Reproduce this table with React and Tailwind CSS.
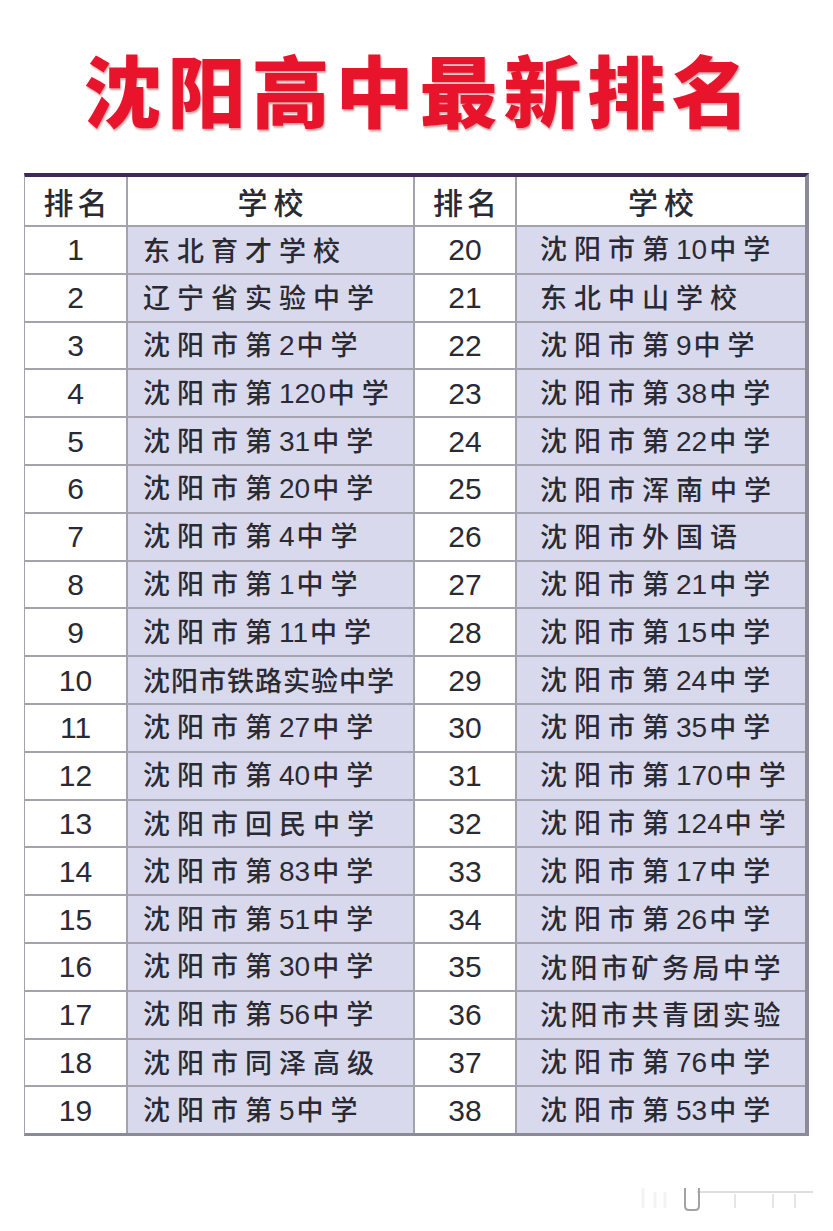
import React from 'react'

const left = [
  '东北育才学校', '辽宁省实验中学', '沈阳市第2中学', '沈阳市第120中学', '沈阳市第31中学',
  '沈阳市第20中学', '沈阳市第4中学', '沈阳市第1中学', '沈阳市第11中学', '沈阳市铁路实验中学',
  '沈阳市第27中学', '沈阳市第40中学', '沈阳市回民中学', '沈阳市第83中学', '沈阳市第51中学',
  '沈阳市第30中学', '沈阳市第56中学', '沈阳市同泽高级', '沈阳市第5中学',
]

const right = [
  '沈阳市第10中学', '东北中山学校', '沈阳市第9中学', '沈阳市第38中学', '沈阳市第22中学',
  '沈阳市浑南中学', '沈阳市外国语', '沈阳市第21中学', '沈阳市第15中学', '沈阳市第24中学',
  '沈阳市第35中学', '沈阳市第170中学', '沈阳市第124中学', '沈阳市第17中学', '沈阳市第26中学',
  '沈阳市矿务局中学', '沈阳市共青团实验', '沈阳市第76中学', '沈阳市第53中学',
]

// digits sit tight, CJK characters get the wide spacing (less when the name is long)
function SchoolName({ name }) {
  const parts = name.split(/(\d+)/).filter(Boolean)
  const cjk = name.replace(/\d/g, '').length
  const spacing = cjk >= 9 ? 'tracking-[1px]' : cjk === 8 ? 'tracking-[3.5px]' : 'tracking-[7px]'
  return (
    <span className={spacing}>
      {parts.map((p, i) =>
        /\d/.test(p) ? (
          <span key={i} className="tracking-normal text-[28px] font-['Liberation_Sans',sans-serif] mr-[2px]">{p}</span>
        ) : (
          <span key={i}>{p}</span>
        )
      )}
    </span>
  )
}

function RankCell({ children, header }) {
  return (
    <div className={`flex items-center justify-center bg-white border-r-2 border-[#a3a3ad] ${header ? 'text-[30px] tracking-[4px] pl-[4px] font-medium' : "text-[30px] font-['Liberation_Sans',sans-serif]"}`}>
      {children}
    </div>
  )
}

export default function App() {
  return (
    <div className="w-[833px] min-h-[1231px] bg-white font-['Noto_Sans_CJK_SC','Noto_Sans',sans-serif] text-[#2a2a33] flex flex-col">
      {/* Title */}
      <h1 className="pt-[49px] text-center text-[78px] leading-none font-black tracking-[6px] pl-[6px] text-[#e8142c] [text-shadow:1px_2px_2px_rgba(110,0,10,0.35)]">
        沈阳高中最新排名
      </h1>

      {/* Ranking table */}
      <div className="mt-[46px] ml-[24px] w-[785px] border-t-[4px] border-[#3e2a55] border-l border-l-[#a3a3ad] border-r-[4px] border-r-[#8a8a98] border-b-[3px] border-b-[#8a8a98]">
        <div className="grid grid-cols-[103px_287px_102px_1fr] h-[48px]">
          <RankCell header>排名</RankCell>
          <div className="flex items-center justify-center bg-white border-r-2 border-[#a3a3ad] text-[30px] tracking-[6px] font-medium pl-[6px]">学校</div>
          <RankCell header>排名</RankCell>
          <div className="flex items-center justify-center bg-white text-[30px] tracking-[6px] font-medium pl-[6px]">学校</div>
        </div>
        {left.map((name, i) => (
          <div key={i} className="grid grid-cols-[103px_287px_102px_1fr] h-[47.8px] border-t-2 border-[#a3a3ad]">
            <RankCell>{i + 1}</RankCell>
            <div className="flex items-center bg-[#d9d9ee] border-r-2 border-[#a3a3ad] pl-[15px] text-[27px] font-medium whitespace-nowrap overflow-hidden">
              <SchoolName name={name} />
            </div>
            <RankCell>{i + 20}</RankCell>
            <div className="flex items-center bg-[#d9d9ee] pl-[23px] text-[27px] font-medium whitespace-nowrap overflow-hidden">
              <SchoolName name={right[i]} />
            </div>
          </div>
        ))}
      </div>

      {/* faint watermark */}
      <div className="mt-[46px] flex justify-end pr-[18px]">
        <svg width="180" height="32" viewBox="0 0 180 32" fill="none">
          <path d="M8 6 L8 26 M20 10 L20 26 M30 10 L30 26" stroke="#f3f3f3" strokeWidth="3" />
          <path d="M50 6 L50 24 Q50 28 54 28 L60 28 Q64 28 64 24 L64 6" stroke="#555" strokeWidth="2" opacity="0.55" />
          <path d="M62 10 L178 10" stroke="#aaa" strokeWidth="1.5" opacity="0.5" />
          <path d="M100 12 L100 26 M138 12 L138 26 M160 12 L160 26" stroke="#ddd" strokeWidth="1.5" />
        </svg>
      </div>
    </div>
  )
}
